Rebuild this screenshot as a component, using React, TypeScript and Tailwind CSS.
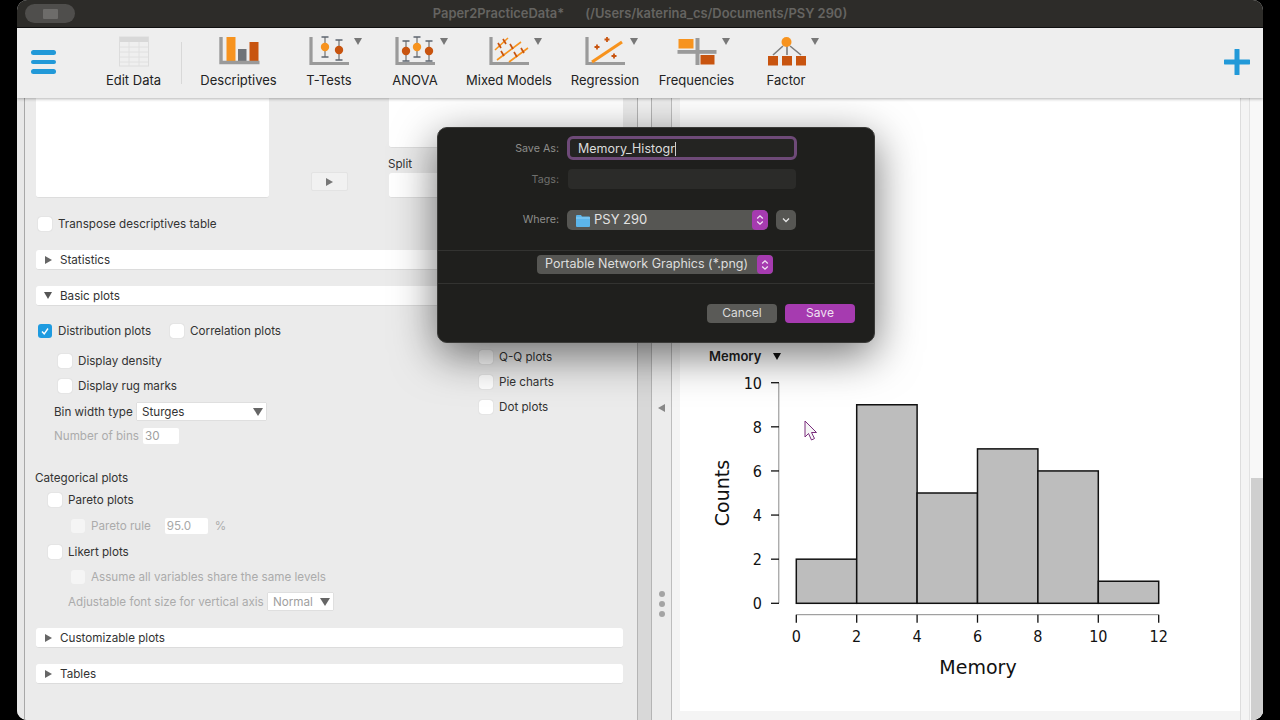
import type { ReactNode } from "react";

const ORANGE = "#f7931e";
const RUST = "#c8540f";
const AXIS = "#9a9a9a";

function LAxis() {
  return <path d="M4 2v26.500H42" fill="none" stroke={AXIS} strokeWidth="3.2" />;
}

function ErrorBar({ x, top, fill }: { x: number; top: number; fill: string }) {
  return (
    <g>
      <path d={`M${x} ${top}v20`} fill="none" stroke="#8a8a8a" strokeWidth="1.5" />
      <path d={`M${x - 3.5} ${top}h7M${x - 3.5} ${top + 20}h7`} fill="none" stroke="#5e6670" strokeWidth="1.4" />
      <circle cx={x} cy={top + 10} r="4.2" fill={fill} />
    </g>
  );
}

function Plus({ x, y }: { x: number; y: number }) {
  return <path d={`M${x - 2.5} ${y}h5M${x} ${y - 2.5}v5`} fill="none" stroke={RUST} strokeWidth="1.8" />;
}

function EditDataIcon() {
  return (
    <svg width="44" height="32" viewBox="0 0 44 32">
      <rect x="7.500" y="2" width="29" height="29" fill="#efefef" stroke="#dcdcdc" />
      <rect x="8" y="2" width="28" height="5" fill="#d8d8d8" />
      <path d="M8 12h28M8 17h28M8 22h28M8 27h28M17 7v24M27 7v24" stroke="#e0e0e0" fill="none" />
    </svg>
  );
}

function DescriptivesIcon() {
  return (
    <svg width="44" height="32" viewBox="0 0 44 32">
      <rect x="9.500" y="2" width="9" height="25" fill={ORANGE} />
      <rect x="21" y="14" width="8.500" height="13" fill="#6f7378" />
      <rect x="32.500" y="7" width="9" height="20" fill={RUST} />
      <path d="M4 2v25.500H42.500" fill="none" stroke={AXIS} strokeWidth="3.400" />
    </svg>
  );
}

function TTestIcon() {
  return (
    <svg width="44" height="32" viewBox="0 0 44 32">
      <LAxis />
      <ErrorBar x={18} top={2} fill={ORANGE} />
      <ErrorBar x={32} top={5} fill={RUST} />
    </svg>
  );
}

function AnovaIcon() {
  return (
    <svg width="44" height="32" viewBox="0 0 44 32">
      <LAxis />
      <ErrorBar x={13} top={6} fill={RUST} />
      <ErrorBar x={24} top={2} fill={ORANGE} />
      <ErrorBar x={36} top={6} fill={RUST} />
    </svg>
  );
}

function MixedIcon() {
  return (
    <svg width="44" height="32" viewBox="0 0 44 32">
      <LAxis />
      <path d="M8 15 21 3M10 25 34 7M22 27 41 13" fill="none" stroke={ORANGE} strokeWidth="1.600" />
      <path d="M11 8l3 5M16 4l3 5M14 16l3 5M23 9l3 5M27 17l3 5M34 13l3 5" fill="none" stroke={RUST} strokeWidth="1.700" />
    </svg>
  );
}

function RegressionIcon() {
  return (
    <svg width="44" height="32" viewBox="0 0 44 32">
      <LAxis />
      <path d="M9 27 39 7" fill="none" stroke={ORANGE} strokeWidth="3.200" />
      <Plus x={14} y={12} />
      <Plus x={24} y={4.500} />
      <Plus x={31} y={21} />
    </svg>
  );
}

function FrequenciesIcon() {
  return (
    <svg width="44" height="32" viewBox="0 0 44 32">
      <rect x="2.500" y="15" width="39" height="3.800" fill={AXIS} />
      <rect x="20.500" y="3" width="4" height="27" fill={AXIS} />
      <rect x="3.500" y="4" width="15" height="9.500" fill={ORANGE} />
      <rect x="25.500" y="20" width="14" height="9.500" fill={RUST} />
    </svg>
  );
}

function FactorIcon() {
  return (
    <svg width="44" height="32" viewBox="0 0 44 32">
      <path d="M19 11 9 20M23 11v9M26 11l11 9" fill="none" stroke="#7d7d7d" strokeWidth="1.600" />
      <circle cx="22.500" cy="7" r="5" fill={ORANGE} />
      <rect x="4" y="21" width="10" height="9.500" fill={RUST} />
      <rect x="18" y="21" width="10" height="9.500" fill={RUST} />
      <rect x="32" y="21" width="10" height="9.500" fill={RUST} />
    </svg>
  );
}

function ToolButton({ label, width, icon, menu }: { label: string; width: string; icon: ReactNode; menu?: boolean }) {
  return (
    <div className={`relative flex flex-col items-center shrink-0 ${width}`}>
      {icon}
      <span className="mt-[5px] text-[13px] leading-4 text-[#222] whitespace-nowrap">{label}</span>
      {menu && <span className="absolute top-[3px] left-[calc(50%+25px)] w-0 h-0 border-x-[4px] border-x-transparent border-t-[7px] border-t-[#777]" />}
    </div>
  );
}

function Check({ checked, faint, className = "" }: { checked?: boolean; faint?: boolean; className?: string }) {
  if (checked) {
    return (
      <span className={`flex items-center justify-center w-[14px] h-[14px] rounded-[3px] bg-[#1e9be0] shrink-0 ${className}`}>
        <svg width="10" height="10" viewBox="0 0 10 10">
          <path d="M2 5.500 4.200 7.800 8 2.500" fill="none" stroke="#fff" strokeWidth="1.400" />
        </svg>
      </span>
    );
  }
  return <span className={`block w-[14px] h-[14px] rounded-[3px] shrink-0 ${faint ? "bg-[#f5f5f5]" : "bg-white shadow-[0_0_1px_rgba(0,0,0,0.25)]"} ${className}`} />;
}

function CheckRow({ label, className = "", checked, faint }: { label: string; className?: string; checked?: boolean; faint?: boolean }) {
  return (
    <div className={`flex items-center h-4 ${className}`}>
      <Check checked={checked} faint={faint} />
      <span className={`ml-[6px] whitespace-nowrap ${faint ? "text-[#ababab]" : "text-[#333]"}`}>{label}</span>
    </div>
  );
}

function SectionBar({ label, open, className = "" }: { label: string; open?: boolean; className?: string }) {
  return (
    <div className={`flex items-center w-[587px] h-5 bg-white rounded-[3px] border-b border-[#dcdcdc] pl-[8px] ${className}`}>
      {open ? (
        <span className="w-0 h-0 border-x-[4px] border-x-transparent border-t-[7px] border-t-[#555]" />
      ) : (
        <span className="w-0 h-0 ml-px border-y-[4px] border-y-transparent border-l-[7px] border-l-[#666]" />
      )}
      <span className="ml-[8px] text-[#333]">{label}</span>
    </div>
  );
}

function MiniSelect({ value, className = "", faint }: { value: string; className?: string; faint?: boolean }) {
  return (
    <div className={`flex items-center justify-between bg-white h-[17px] pl-[5px] pr-[3px] shadow-[0_0_1px_rgba(0,0,0,0.3)] ${className}`}>
      <span className={faint ? "text-[#a0a0a0]" : "text-[#333]"}>{value}</span>
      <span className="w-0 h-0 border-x-[5px] border-x-transparent border-t-[8px] border-t-[#666]" />
    </div>
  );
}

function Stepper({ className = "" }: { className?: string }) {
  return (
    <span className={`flex items-center justify-center bg-[#a63bb0] ${className}`}>
      <svg width="8" height="12" viewBox="0 0 8 12">
        <path d="M1.200 4.500 4 1.800 6.800 4.500M1.200 7.500 4 10.200 6.800 7.500" fill="none" stroke="#f2e3f4" strokeWidth="1.300" />
      </svg>
    </span>
  );
}

function SaveDialog() {
  return (
    <div className="absolute left-[437px] top-[127px] w-[438px] h-[216px] rounded-[10px] bg-[#1f1f1d] border border-[#3a3a38] shadow-[0_12px_44px_rgba(0,0,0,0.55)] text-[12px]">
      <div className="flex items-center h-[24px] mt-[8px]">
        <span className="w-[121px] pt-[2px] text-right text-[#8d8d8b] text-[10.700px]">Save As:</span>
        <div className="flex items-center ml-[8px] w-[230px] h-[24px] rounded-[6px] border-[3px] border-[#6e4a78] bg-[#242422] pl-[8px] pt-[2px]">
          <span className="text-[#dcdcdc] text-[12.500px]">Memory_Histogr</span>
          <span className="w-px h-[14px] bg-[#cfcfcf]" />
        </div>
      </div>
      <div className="flex items-center h-[20px] mt-[9px]">
        <span className="w-[121px] pt-[3px] text-right text-[#6f6f6d] text-[10.700px]">Tags:</span>
        <div className="ml-[9px] w-[228px] h-[20px] rounded-[4px] bg-[#2b2b29]" />
      </div>
      <div className="flex items-center h-[20px] mt-[21px]">
        <span className="w-[121px] text-right text-[#8d8d8b] text-[10.700px]">Where:</span>
        <div className="flex items-center ml-[8px] w-[201px] h-[20px] rounded-[5px] bg-[#565653] pl-[9px] overflow-hidden">
          <svg width="14" height="13" viewBox="0 0 14 13" className="shrink-0">
            <path d="M0 2q0-1 1-1h4l1 1.500h7q1 0 1 1V12q0 1-1 1H1q-1 0-1-1z" fill="#5cb5ea" />
            <path d="M0 4h14" stroke="#8fd0f5" strokeWidth="1" />
          </svg>
          <span className="ml-[4px] text-[#e2e2e2] text-[13px]">PSY 290</span>
          <Stepper className="ml-auto w-[16px] h-[20px] rounded-[4px]" />
        </div>
        <div className="flex items-center justify-center ml-[8px] w-[20px] h-[20px] rounded-[5px] bg-[#565653]">
          <svg width="8" height="6" viewBox="0 0 8 6">
            <path d="M1 1.500 4 4.500 7 1.500" fill="none" stroke="#e6e6e6" strokeWidth="1.300" />
          </svg>
        </div>
      </div>
      <div className="mt-[20px] border-t border-[#333331] h-[33px] pt-[4px]">
        <div className="flex items-center ml-[99px] w-[236px] h-[19px] rounded-[4px] bg-[#565653] pl-[8px] overflow-hidden">
          <span className="text-[#dedede] text-[12.500px] whitespace-nowrap">Portable Network Graphics (*.png)</span>
          <Stepper className="ml-auto w-[16px] h-[19px] rounded-[4px]" />
        </div>
      </div>
      <div className="border-t border-[#333331] flex justify-end gap-[8px] pr-[19px] pt-[20px]">
        <button className="w-[70px] h-[19px] pb-[2px] rounded-[4px] bg-[#5a5a57] text-[#dcdcdc]">Cancel</button>
        <button className="w-[70px] h-[19px] pb-[2px] rounded-[4px] bg-[#a63bb0] text-[#f0e2f2]">Save</button>
      </div>
    </div>
  );
}

const bars = [
  { from: 0, n: 2 },
  { from: 2, n: 9 },
  { from: 4, n: 5 },
  { from: 6, n: 7 },
  { from: 8, n: 6 },
  { from: 10, n: 1 },
];

// x and y of the histogram, in the svg's own pixels
const px = (v: number) => 96.3 + v * 30.2;
const py = (v: number) => 228.3 - v * 22.06;

function Histogram() {
  return (
    <svg width="500" height="310" viewBox="0 0 500 310" className="[font-family:'DejaVu_Sans',sans-serif]">
      <path d="M78.800 8v220" stroke="#8a8a8a" fill="none" />
      {[0, 2, 4, 6, 8, 10].map((t) => (
        <g key={t}>
          <path d={`M71 ${py(t)}h8`} stroke="#111" strokeWidth="1.300" />
          <text x="62" y={py(t) + 6} textAnchor="end" fontSize="16" fill="#111" className="[font-stretch:condensed]">{t}</text>
        </g>
      ))}
      {bars.map((b) => (
        <rect key={b.from} x={px(b.from)} y={py(b.n)} width={60.4} height={py(0) - py(b.n)} fill="#bdbdbd" stroke="#111" strokeWidth="1.500" />
      ))}
      <path d="M96.300 239.700H458.700" stroke="#8a8a8a" fill="none" />
      {[0, 2, 4, 6, 8, 10, 12].map((t) => (
        <g key={t}>
          <path d={`M${px(t)} 239.700v8`} stroke="#111" strokeWidth="1.300" />
          <text x={px(t)} y="267" textAnchor="middle" fontSize="16" fill="#111" className="[font-stretch:condensed]">{t}</text>
        </g>
      ))}
      <text x="278" y="299" textAnchor="middle" fontSize="19" fill="#111">Memory</text>
      <text transform="translate(29 118) rotate(-90)" textAnchor="middle" fontSize="19" fill="#111">Counts</text>
    </svg>
  );
}

export default function App() {
  return (
    <div className="relative flex w-[1280px] h-[720px] overflow-hidden bg-black pl-[17px] [font-family:Inter,'Liberation_Sans',sans-serif]">
      <div className="flex flex-col w-[1246px] h-full rounded-[10px] overflow-hidden bg-[#eeeeee]">
        {/* Title bar */}
        <div className="relative flex items-center justify-center h-[28px] shrink-0 bg-[#2d2c29] border-b border-[#111]">
          <div className="absolute left-[8px] top-[4px] flex items-center justify-center w-[50px] h-[19px] rounded-full bg-[#4f4e4c]">
            <span className="block w-[15px] h-[10px] rounded-[1px] bg-[#6d6c6a]" />
          </div>
          <span className="text-[12.900px] font-semibold text-[#656461] whitespace-nowrap">Paper2PracticeData*</span>
          <span className="ml-[21px] text-[12.900px] font-semibold text-[#656461] whitespace-nowrap">(/Users/katerina_cs/Documents/PSY 290)</span>
        </div>

        {/* Toolbar */}
        <div className="relative z-10 flex items-start h-[70px] shrink-0 bg-[#eeeeee] shadow-[0_1px_3px_rgba(0,0,0,0.3)] pt-[7px]">
          <div className="flex flex-col gap-[5px] ml-[14px] mt-[15px] w-[25px] shrink-0">
            <span className="block h-[4.500px] rounded-full bg-[#2299d8]" />
            <span className="block h-[4.500px] rounded-full bg-[#2299d8]" />
            <span className="block h-[4.500px] rounded-full bg-[#2299d8]" />
          </div>
          <div className="flex ml-[42.500px]">
            <ToolButton label="Edit Data" width="w-[70px]" icon={<EditDataIcon />} />
            <div className="w-px h-[42px] mt-[7px] mx-[12px] bg-[#d8d8d8] shrink-0" />
            <ToolButton label="Descriptives" width="w-[90px]" icon={<DescriptivesIcon />} />
            <ToolButton label="T-Tests" width="w-[91px]" icon={<TTestIcon />} menu />
            <ToolButton label="ANOVA" width="w-[81px]" icon={<AnovaIcon />} menu />
            <ToolButton label="Mixed Models" width="w-[107px]" icon={<MixedIcon />} menu />
            <ToolButton label="Regression" width="w-[85px]" icon={<RegressionIcon />} menu />
            <ToolButton label="Frequencies" width="w-[98px]" icon={<FrequenciesIcon />} menu />
            <ToolButton label="Factor" width="w-[81px]" icon={<FactorIcon />} menu />
          </div>
          <svg width="26" height="26" viewBox="0 0 26 26" className="absolute left-[1207px] top-[21px]">
            <path d="M13 1v24M1 13h24" stroke="#2299d8" strokeWidth="5" strokeLinecap="round" />
          </svg>
        </div>

        {/* Body */}
        <div className="flex flex-1 min-h-0">
          {/* Options panel */}
          <div className="w-[8px] shrink-0 bg-[#e8e8e8] border-r border-[#a8a8a8]" />
          <div className="w-[612px] shrink-0 bg-[#ebebeb] pl-[11px] text-[11.650px] leading-4 overflow-hidden">
            <div className="flex h-[100px]">
              <div className="w-[233px] rounded-b-[3px] bg-white border-b border-[#dddddd]" />
              <div className="flex items-center justify-center ml-[42px] mt-[74px] w-[37px] h-[19px] rounded-[2px] bg-[#f1f1f1] border border-[#e3e3e3]">
                <span className="w-0 h-0 border-y-[4px] border-y-transparent border-l-[7px] border-l-[#777]" />
              </div>
              <div className="ml-[41px] w-[234px]">
                <div className="h-[50px] rounded-b-[3px] bg-white border-b border-[#dddddd]" />
                <div className="h-[25px] pt-[8px] text-[#333] -ml-px">Split</div>
                <div className="h-[25px] rounded-[3px] bg-white border-b border-[#dddddd]" />
              </div>
            </div>
            <CheckRow label="Transpose descriptives table" className="mt-[18px] ml-[2px]" />
            <SectionBar label="Statistics" className="mt-[18px]" />
            <SectionBar label="Basic plots" open className="mt-[16px]" />

            <div className="flex">
              <div className="w-[443px] shrink-0">
                <div className="flex mt-[17px] ml-[2px]">
                  <CheckRow label="Distribution plots" checked />
                  <CheckRow label="Correlation plots" className="ml-[19px]" />
                </div>
                <CheckRow label="Display density" className="mt-[14px] ml-[22px]" />
                <CheckRow label="Display rug marks" className="mt-[9px] ml-[22px]" />
                <div className="flex items-center h-[17px] mt-[9px] ml-[18px]">
                  <span className="w-[83px] text-[#333] whitespace-nowrap">Bin width type</span>
                  <MiniSelect value="Sturges" className="w-[129px]" />
                </div>
                <div className="flex items-center h-4 mt-[8px] ml-[18px]">
                  <span className="w-[89px] text-[#ababab] whitespace-nowrap">Number of bins</span>
                  <span className="w-[36px] h-4 pl-[2px] bg-white rounded-[2px] text-[#a0a0a0]">30</span>
                </div>
                <div className="mt-[26px] -ml-px text-[#333]">Categorical plots</div>
                <CheckRow label="Pareto plots" className="mt-[6px] ml-[12px]" />
                <div className="flex items-center mt-[10px] ml-[35px]">
                  <CheckRow label="Pareto rule" faint />
                  <span className="ml-[14px] w-[43px] h-4 pl-[2px] bg-white rounded-[2px] text-[#a8a8a8]">95.0</span>
                  <span className="ml-[7px] text-[#ababab]">%</span>
                </div>
                <CheckRow label="Likert plots" className="mt-[10px] ml-[12px]" />
                <CheckRow label="Assume all variables share the same levels" faint className="mt-[9px] ml-[35px]" />
                <div className="flex items-center h-[17px] mt-[8px] ml-[32px]">
                  <span className="w-[200px] text-[#ababab] whitespace-nowrap">Adjustable font size for vertical axis</span>
                  <MiniSelect value="Normal" faint className="w-[65px]" />
                </div>
              </div>
              <div className="pt-[43px]">
                <CheckRow label="Q-Q plots" />
                <CheckRow label="Pie charts" className="mt-[9px]" />
                <CheckRow label="Dot plots" className="mt-[9px]" />
              </div>
            </div>

            <SectionBar label="Customizable plots" className="mt-[18px]" />
            <SectionBar label="Tables" className="mt-[16px]" />
          </div>

          {/* Splitter */}
          <div className="w-[15px] shrink-0 bg-[#f2f2f2] border-x border-[#b4b4b4] pt-[90px]">
            <div className="h-full bg-[#d8d8d8]" />
          </div>
          <div className="flex flex-col items-center w-[20px] shrink-0 bg-[#ececec] border-r border-[#bdbdbd]">
            <span className="mt-[306px] w-0 h-0 border-y-[4px] border-y-transparent border-r-[7px] border-r-[#888]" />
            <span className="mt-[179px] w-[6px] h-[6px] rounded-full bg-[#a4a4a4]" />
            <span className="mt-[4px] w-[6px] h-[6px] rounded-full bg-[#a4a4a4]" />
            <span className="mt-[4px] w-[6px] h-[6px] rounded-full bg-[#a4a4a4]" />
          </div>

          {/* Results */}
          <div className="flex flex-1 min-w-0 bg-[#f4f4f4] pl-[8px]">
            <div className="w-[560px] h-[613px] shrink-0 bg-white pl-[29px] pt-[251px]">
              <div className="flex items-center h-4 text-[13px] font-semibold text-[#222]">
                Memory
                <span className="ml-[12px] mb-[2px] w-0 h-0 border-x-[4px] border-x-transparent border-t-[7px] border-t-[#111]" />
              </div>
              <div className="mt-[10px] -ml-[9px]">
                <Histogram />
              </div>
            </div>
            <div className="flex-1 border-l border-[#dddddd] pl-[8px]">
              <div className="h-full pt-[380px] pl-px bg-[#f8f8f8] border-l border-[#e2e2e2]">
                <div className="h-[242px] bg-[#cfcfcf]" />
              </div>
            </div>
          </div>
        </div>
      </div>

      <SaveDialog />

      {/* Mouse pointer */}
      <svg width="14" height="22" viewBox="0 0 14 22" className="absolute left-[804px] top-[420px]">
        <path d="M1 1v16l3.500-3.500 3 6.500 3-1.500-3-6h5z" fill="#f6f6f6" stroke="#7a2d7d" strokeWidth="1" />
      </svg>
    </div>
  );
}
